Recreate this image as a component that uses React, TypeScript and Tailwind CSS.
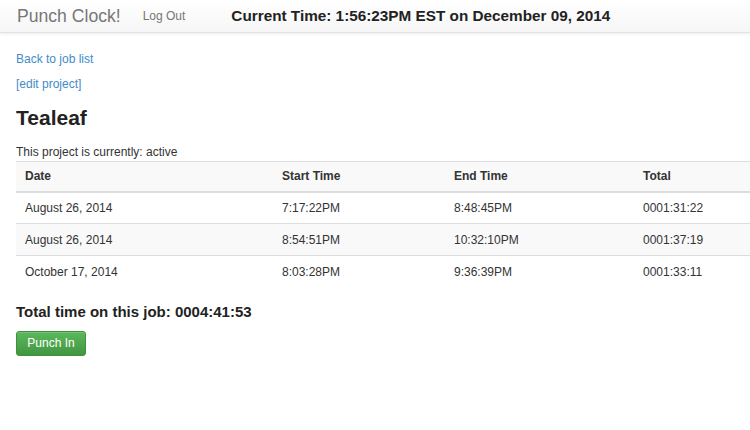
import React from 'react';

const rows = [
  { date: 'August 26, 2014', start: '7:17:22PM', end: '8:48:45PM', total: '0001:31:22' },
  { date: 'August 26, 2014', start: '8:54:51PM', end: '10:32:10PM', total: '0001:37:19' },
  { date: 'October 17, 2014', start: '8:03:28PM', end: '9:36:39PM', total: '0001:33:11' },
];

export default function App() {
  return (
    <div className="min-h-[430px] bg-white text-[12px] text-[#333] font-['Liberation_Sans',Arial,sans-serif]">
      <div className="h-[33px] flex items-center bg-gradient-to-b from-white to-[#f6f6f6] border-b border-[#e2e2e2] shadow-[0_1px_3px_rgba(0,0,0,0.08)]">
        <span className="ml-[17px] text-[17.6px] text-[#777]">Punch Clock!</span>
        <span className="ml-[22px] text-[12px] text-[#777]">Log Out</span>
        <span className="ml-[46px] text-[15.3px] font-bold text-[#222]">
          Current Time: 1:56:23PM EST on December 09, 2014
        </span>
      </div>

      <div className="pl-4">
        <a className="block mt-[17px] text-[#428bca] leading-[18px]">Back to job list</a>
        <a className="block mt-[7px] text-[#428bca] leading-[18px]">[edit project]</a>
        <h1 className="mt-[12px] text-[21px] font-bold text-[#222] leading-[26px]">Tealeaf</h1>
        <p className="mt-[12px] leading-[18px]">This project is currently: active</p>

        <table className="w-full border-collapse">
          <thead>
            <tr className="bg-[#f9f9f9] border-t border-[#ddd] border-b-2 border-b-[#ddd]">
              <th className="text-left font-bold text-[12px] h-[30px] pl-[9px] w-[266px]">Date</th>
              <th className="text-left font-bold text-[12px] pl-0 w-[172px]">Start Time</th>
              <th className="text-left font-bold text-[12px] pl-0 w-[189px]">End Time</th>
              <th className="text-left font-bold text-[12px] pl-0">Total</th>
            </tr>
          </thead>
          <tbody>
            {rows.map((r, i) => (
              <tr key={i} className={`border-t border-[#ddd] ${i % 2 === 1 ? 'bg-[#f9f9f9]' : 'bg-white'}`}>
                <td className="h-[32px] pl-[9px]">{r.date}</td>
                <td>{r.start}</td>
                <td>{r.end}</td>
                <td>{r.total}</td>
              </tr>
            ))}
          </tbody>
        </table>

        <h3 className="mt-[14px] text-[15px] font-bold text-[#222] leading-[20px]">Total time on this job: 0004:41:53</h3>
        <button className="mt-[9px] w-[70px] h-[25px] rounded-[3px] text-white text-[12px] bg-gradient-to-b from-[#5cb85c] to-[#419641] border border-[#3e8f3e] shadow-[inset_0_1px_0_rgba(255,255,255,0.15)]">
          Punch In
        </button>
      </div>
    </div>
  );
}
